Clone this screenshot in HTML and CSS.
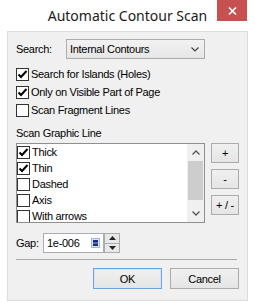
FILE: index.html
```html
<!DOCTYPE html>
<html lang="en">
<head>
    <meta charset="UTF-8">
    <title>Automatic Contour Scan</title>
    <link rel="stylesheet" href="styles.css">
</head>
<body>
    <div class="window">
        <div class="titlebar">
            <span></span>
            <div class="title">Automatic Contour Scan</div>
            <div class="close">
                <svg width="9" height="8" viewBox="0 0 9 8"><path d="M1 0.5 L8 7.5 M8 0.5 L1 7.5" stroke="#fff" stroke-width="1.6" fill="none"/></svg>
            </div>
        </div>

        <div class="client">
            <div class="search-row">
                <span class="search-label">Search:</span>
                <div class="combo">
                    <span>Internal Contours</span>
                    <svg class="chevron" width="8" height="5" viewBox="0 0 8 5"><path d="M0.5 0.5 L4 4 L7.5 0.5" stroke="#444" stroke-width="1.2" fill="none"/></svg>
                </div>
            </div>

            <div class="check first">
                <span class="box"><svg width="11" height="11" viewBox="0 0 11 11"><path d="M1.5 5.5 L4 8 L9.5 2" stroke="#000" stroke-width="2" fill="none"/></svg></span>
                Search for Islands (Holes)
            </div>
            <div class="check">
                <span class="box"><svg width="11" height="11" viewBox="0 0 11 11"><path d="M1.5 5.5 L4 8 L9.5 2" stroke="#000" stroke-width="2" fill="none"/></svg></span>
                Only on Visible Part of Page
            </div>
            <div class="check">
                <span class="box"></span>
                Scan Fragment Lines
            </div>

            <div class="group-label">Scan Graphic Line</div>

            <div class="list-row">
                <div class="list">
                    <div class="items">
                        <div class="item">
                            <span class="box"><svg width="11" height="11" viewBox="0 0 11 11"><path d="M1.5 5.5 L4 8 L9.5 2" stroke="#000" stroke-width="2" fill="none"/></svg></span>Thick
                        </div>
                        <div class="item">
                            <span class="box"><svg width="11" height="11" viewBox="0 0 11 11"><path d="M1.5 5.5 L4 8 L9.5 2" stroke="#000" stroke-width="2" fill="none"/></svg></span>Thin
                        </div>
                        <div class="item"><span class="box"></span>Dashed</div>
                        <div class="item"><span class="box"></span>Axis</div>
                        <div class="item"><span class="box"></span>With arrows</div>
                    </div>
                    <div class="scrollbar">
                        <div class="arrow">
                            <svg width="8" height="5" viewBox="0 0 8 5"><path d="M0.5 4.5 L4 1 L7.5 4.5" stroke="#555" stroke-width="1.3" fill="none"/></svg>
                        </div>
                        <div class="track"><div class="thumb"></div></div>
                        <div class="arrow">
                            <svg width="8" height="5" viewBox="0 0 8 5"><path d="M0.5 0.5 L4 4 L7.5 0.5" stroke="#555" stroke-width="1.3" fill="none"/></svg>
                        </div>
                    </div>
                </div>
                <div class="side-buttons">
                    <button class="btn">+</button>
                    <button class="btn">-</button>
                    <button class="btn">+ / -</button>
                </div>
            </div>

            <div class="gap-row">
                <span class="gap-label">Gap:</span>
                <div class="field">
                    <span>1e-006</span>
                    <svg class="calc" width="9" height="10" viewBox="0 0 9 10">
                        <rect x="0.5" y="0.5" width="8" height="9" fill="#d6e4f5" stroke="#9cb8dc"/>
                        <rect x="2" y="2" width="5" height="6" fill="#1c2a8a"/>
                        <rect x="2" y="4.6" width="5" height="0.9" fill="#9fb4e0"/>
                    </svg>
                </div>
                <div class="spin">
                    <div class="spin-half">
                        <svg width="7" height="4" viewBox="0 0 7 4"><path d="M0 4 L3.5 0 L7 4 Z" fill="#222"/></svg>
                    </div>
                    <div class="spin-half lower">
                        <svg width="7" height="4" viewBox="0 0 7 4"><path d="M0 0 L3.5 4 L7 0 Z" fill="#222"/></svg>
                    </div>
                </div>
            </div>

            <div class="separator"></div>

            <div class="actions">
                <button class="btn action default">OK</button>
                <button class="btn action">Cancel</button>
            </div>
        </div>
    </div>
</body>
</html>
```

FILE: styles.css
```css
body {
    margin: 0;
    background: #fff;
    font-family: "Liberation Sans", Arial, sans-serif;
    font-size: 11px;
    letter-spacing: -0.3px;
    color: #000;
}

.window {
    width: 255px;
    height: 303px;
    background: #fff;
    overflow: hidden;
}

/* Barra de titulo */
.titlebar {
    height: 31px;
    display: grid;
    grid-template-columns: 1fr auto 1fr;
}

.title {
    font-family: "Noto Sans", "Open Sans", sans-serif;
    font-size: 14px;
    letter-spacing: 0;
    line-height: 19px;
    padding-top: 6px;
    color: #1a1a1a;
    white-space: nowrap;
}

.close {
    justify-self: end;
    width: 30px;
    height: 21px;
    margin-right: 8px;
    background: #c75050;
    display: flex;
    justify-content: center;
    align-items: center;
}

/* Area de cliente */
.client {
    margin: 0 7px;
    border: 1px solid #dcdcdc;
    background: #f0f0f0;
    padding: 7px 8px 11px;
}

.search-row {
    display: flex;
    align-items: center;
    height: 20px;
}

.search-label {
    width: 50px;
}

.combo {
    width: 139px;
    height: 20px;
    box-sizing: border-box;
    border: 1px solid #acacac;
    background: linear-gradient(#f2f2f2, #e6e6e6);
    display: flex;
    align-items: center;
    padding-left: 3px;
}

.chevron {
    margin-left: auto;
    margin-right: 5px;
}

.check {
    display: flex;
    align-items: center;
    gap: 2px;
    height: 18px;
}

.check.first {
    margin-top: 6px;
}

.box {
    width: 13px;
    height: 13px;
    box-sizing: border-box;
    border: 1px solid #333;
    background: #fff;
    display: flex;
    justify-content: center;
    align-items: center;
    flex-shrink: 0;
}

.group-label {
    margin-top: 7px;
    line-height: 14px;
}

/* Lista con casillas */
.list-row {
    margin-top: 3px;
    display: flex;
    gap: 6px;
}

.list {
    width: 189px;
    height: 80px;
    box-sizing: border-box;
    border: 1px solid #8e8f8f;
    background: #fff;
    display: flex;
}

.items {
    flex: 1;
    overflow: hidden;
}

.item {
    height: 16px;
    display: flex;
    align-items: center;
    gap: 2px;
}

.scrollbar {
    width: 17px;
    display: flex;
    flex-direction: column;
    background: #f0f0f0;
}

.arrow {
    height: 17px;
    display: flex;
    justify-content: center;
    align-items: center;
}

.track {
    flex: 1;
}

.thumb {
    height: 39px;
    margin: 0 1px;
    background: #cdcdcd;
}

.side-buttons {
    display: flex;
    flex-direction: column;
    gap: 6px;
}

.btn {
    width: 28px;
    height: 20px;
    padding: 0;
    border: 1px solid #acacac;
    background: linear-gradient(#f0f0f0, #e5e5e5);
    font-family: inherit;
    font-size: 11px;
    letter-spacing: inherit;
    color: #000;
}

/* Fila de separacion */
.gap-row {
    margin-top: 10px;
    display: flex;
    align-items: center;
    height: 20px;
}

.gap-label {
    width: 27px;
}

.field {
    width: 61px;
    height: 20px;
    box-sizing: border-box;
    border: 1px solid #abadb3;
    background: #fff;
    display: flex;
    align-items: center;
    padding-left: 3px;
}

.calc {
    margin-left: auto;
    margin-right: 3px;
}

.spin {
    width: 16px;
    height: 20px;
    box-sizing: border-box;
    border: 1px solid #acacac;
    background: #e8e8e8;
    display: flex;
    flex-direction: column;
}

.spin-half {
    flex: 1;
    display: flex;
    justify-content: center;
    align-items: center;
}

.spin-half.lower {
    border-top: 1px solid #acacac;
}

.separator {
    margin: 6px 2px 0 0;
    height: 1px;
    background: #a8a8a8;
}

.actions {
    margin-top: 8px;
    display: flex;
    justify-content: flex-end;
    gap: 8px;
}

.btn.action {
    width: 69px;
    height: 21px;
}

.btn.default {
    border-color: #6fa4d8;
    box-shadow: inset 0 0 0 1px #d4e6f7;
}
```
